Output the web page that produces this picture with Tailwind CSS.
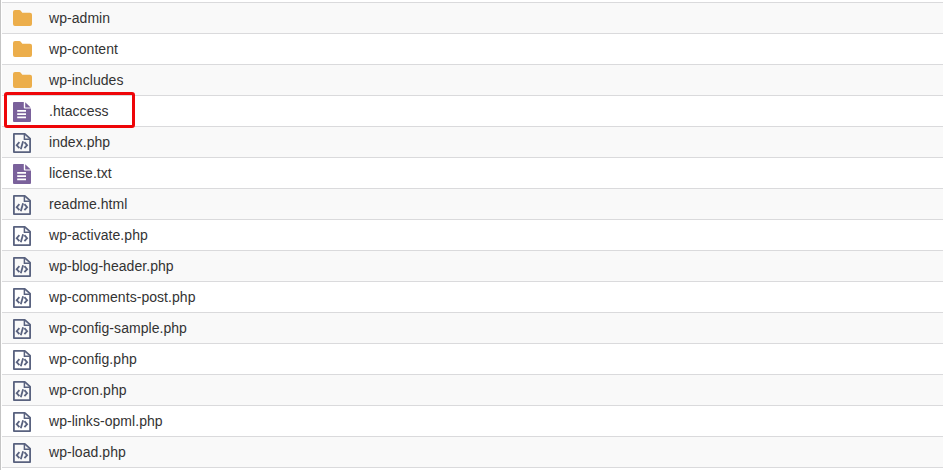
<!DOCTYPE html>
<html lang="en">
<head>
    <meta charset="UTF-8">
    <meta name="viewport" content="width=device-width, initial-scale=1.0">
    <title>File Manager</title>
    <script src="https://cdn.jsdelivr.net/npm/@tailwindcss/browser@4"></script>
</head>
<body class="bg-white text-[#333] text-[14px] tracking-[0.05px] font-['Liberation_Sans',Arial,sans-serif] h-[470px] overflow-hidden">

    <!-- Icons -->
    <svg class="hidden">
        <symbol id="icon-folder" viewBox="0 0 19 16">
            <path fill="#ecae4b" d="M2 0h4.2a2 2 0 0 1 1.6.8L9.3 2.8H17a2 2 0 0 1 2 2V14a2 2 0 0 1-2 2H2a2 2 0 0 1-2-2V2a2 2 0 0 1 2-2z"/>
        </symbol>
        <symbol id="icon-text" viewBox="0 0 18 20">
            <path fill="#7a619b" d="M1 0h9.8v5.6a1 1 0 0 0 1 1H18V19a1 1 0 0 1-1 1H1a1 1 0 0 1-1-1V1a1 1 0 0 1 1-1zM12.2 0.2l5.5 5.2h-5.5z"/>
            <path stroke="#fff" stroke-width="1.8" d="M4.2 8.8h8.8M4.2 12.1h8.8M4.2 15.4h8.8"/>
        </symbol>
        <symbol id="icon-code" viewBox="0 0 18 20">
            <g fill="none" stroke="#59627f" stroke-width="1.8">
                <path stroke-linejoin="round" d="M0.9 0.9h10.9l5.3 4.8v13.4H0.9z"/>
                <path stroke-width="1.5" d="M11.4 1v5.2h5.6"/>
                <path stroke-width="1.8" d="M6.4 9.2l-2.7 3 2.7 3M11.4 9.2l2.7 3-2.7 3M10.1 8.2l-2.3 8"/>
            </g>
        </symbol>
    </svg>

    <div class="relative h-[470px] border-l border-[#c4c4c4] pl-px pt-[2px]">
        <ul id="fileList" class="border-b border-[#dadadc]"></ul>

        <!-- Highlighted file -->
        <div class="absolute left-[3px] top-[92px] w-[131px] h-[36px] border-3 border-[#ee0508] rounded-[3px]"></div>
    </div>

    <script>
        const files = [
            ['folder', 'wp-admin'],
            ['folder', 'wp-content'],
            ['folder', 'wp-includes'],
            ['text', '.htaccess'],
            ['code', 'index.php'],
            ['text', 'license.txt'],
            ['code', 'readme.html'],
            ['code', 'wp-activate.php'],
            ['code', 'wp-blog-header.php'],
            ['code', 'wp-comments-post.php'],
            ['code', 'wp-config-sample.php'],
            ['code', 'wp-config.php'],
            ['code', 'wp-cron.php'],
            ['code', 'wp-links-opml.php'],
            ['code', 'wp-load.php']
        ];

        const iconClasses = {
            folder: 'w-[19px] h-[16px] mt-[7px]',
            text: 'w-[18px] h-[20px] mt-[6px]',
            code: 'w-[18px] h-[20px] mt-[6px]'
        };

        document.getElementById('fileList').innerHTML = files.map(([type, name]) => `
            <li class="flex h-[31px] border-t border-[#dadadc] pl-[11px] odd:bg-[#f9f9f9]">
                <div class="w-[36px]"><svg class="${iconClasses[type]}"><use href="#icon-${type}"/></svg></div>
                <span class="leading-[30px]">${name}</span>
            </li>`).join('');
    </script>

</body>
</html>
